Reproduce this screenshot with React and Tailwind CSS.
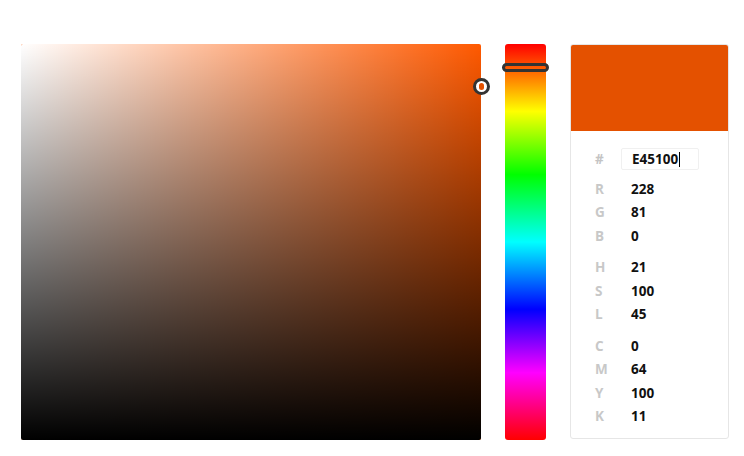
import React from 'react';

const hex = 'E45100';

const groups = [
    [['R', '228'], ['G', '81'], ['B', '0']],
    [['H', '21'], ['S', '100'], ['L', '45']],
    [['C', '0'], ['M', '64'], ['Y', '100'], ['K', '11']],
];

const App = () => {
    return (
        <div className="w-[744px] h-[456px] bg-white font-['Open_Sans',sans-serif]">
            <div className="flex pt-[44px] pl-[21px] gap-[24px]">
                {/* Saturation / value box */}
                <div className="relative w-[460px] h-[396px] rounded-[2px] bg-[#ff5900]">
                    <div className="absolute inset-0 rounded-[2px] bg-gradient-to-r from-white to-transparent" />
                    <div className="absolute inset-0 rounded-[2px] bg-gradient-to-b from-transparent to-black" />
                    <div className="absolute left-[452px] top-[34px] w-[17px] h-[17px] rounded-full border-[3px] border-[#333] bg-white flex items-center justify-center">
                        <div className="w-[5px] h-[7px] rounded-full bg-[#e45100]" />
                    </div>
                </div>

                {/* Hue strip */}
                <div className="relative w-[41px] h-[396px] rounded-[3px] bg-[linear-gradient(to_bottom,#ff0000_0%,#ffff00_17%,#00ff00_33%,#00ffff_50%,#0000ff_67%,#ff00ff_83%,#ff0000_100%)]">
                    <div className="absolute left-[-3px] right-[-3px] top-[19px] h-[9px] rounded-full border-[3px] border-[#333] bg-transparent" />
                </div>

                {/* Values panel */}
                <div className="w-[159px] h-[395px] rounded-[3px] border border-[#e6e6e6] overflow-hidden">
                    <div className="h-[86px] bg-[#e45100]" />
                    <div className="pl-[24px] pt-[17px] text-[13.5px] font-bold">
                        <div className="flex items-center h-[22px]">
                            <span className="w-[26px] text-[#c4c4c4]">#</span>
                            <div className="w-[78px] h-[22px] border border-[#f0f0f0] rounded-[2px] flex items-center pl-[10px] text-[#111]">
                                {hex}<span className="w-px h-[15px] bg-black ml-px" />
                            </div>
                        </div>
                        {groups.map((g, gi) => (
                            <div key={gi} className={gi === 0 ? 'mt-[7px]' : 'mt-[8px]'}>
                                {g.map(([k, v]) => (
                                    <div key={k} className="flex items-center h-[23.5px]">
                                        <span className="w-[36px] text-[#c8c8c8]">{k}</span>
                                        <span className="text-[#111]">{v}</span>
                                    </div>
                                ))}
                            </div>
                        ))}
                    </div>
                </div>
            </div>
        </div>
    );
};

export default App;
